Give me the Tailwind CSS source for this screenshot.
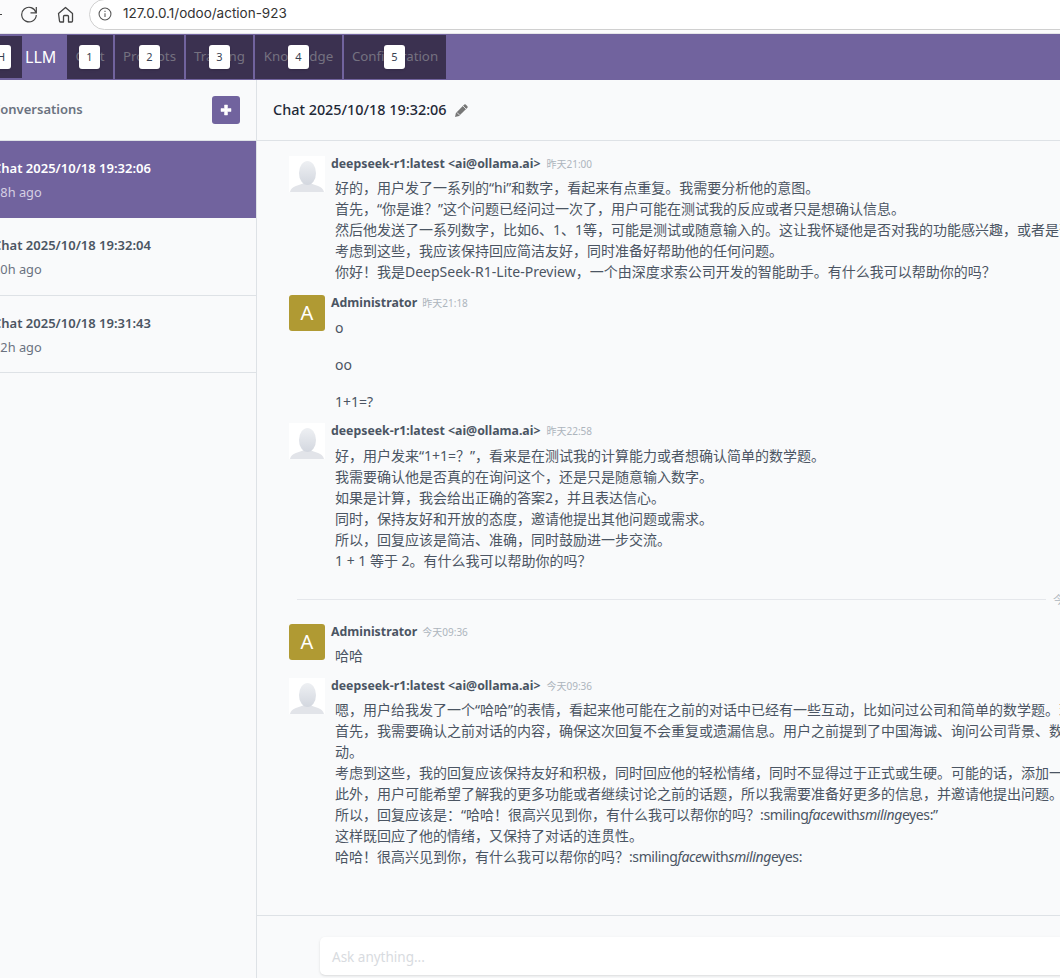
<!DOCTYPE html>
<html>
<head>
<meta charset="utf-8">
<script src="https://cdn.jsdelivr.net/npm/@tailwindcss/browser@4"></script>
</head>
<body class="w-[1060px] h-[978px] overflow-hidden bg-white font-['Noto_Sans','Noto_Sans_CJK_SC',sans-serif] text-[#374151]">
<!-- browser toolbar -->
<div class="h-[34px] bg-[#fbfbfc] border-b border-[#e5e5e8]">
  <div class="h-[28px] flex items-center">
    <div class="w-[2px] h-[1px] bg-[#444] shrink-0"></div>
    <svg class="ml-[18px] w-[18px] h-[18px] shrink-0 text-[#444]" viewBox="0 0 18 18" fill="none" stroke="currentColor" stroke-width="1.2"><path d="M16 7.500A7.300 7.300 0 1 0 16.300 10"/><path d="M16.300 2v5.800h-5.800"/></svg>
    <svg class="ml-[19px] w-[17px] h-[17px] shrink-0 text-[#444]" viewBox="0 0 17 17" fill="none" stroke="currentColor" stroke-width="1.3" stroke-linejoin="round"><path d="M1.500 7.500 8.500 1.500l7 6v7.500a1 1 0 0 1-1 1h-3V10.500a1 1 0 0 0-1-1h-3a1 1 0 0 0-1 1V16h-3a1 1 0 0 1-1-1z"/></svg>
    <div class="ml-[15px] w-[1000px] h-[31px] shrink-0 rounded-full border border-[#d0d0d0] bg-white flex items-center pl-[8px] font-['Inter','Noto_Sans',sans-serif]">
      <svg class="w-[14px] h-[14px] shrink-0 text-[#555]" viewBox="0 0 16 16" fill="none" stroke="currentColor" stroke-width="1.200"><circle cx="8" cy="8" r="6.800"/><path d="M8 7.200v4.300M8 4.200v1.500"/></svg>
      <span class="ml-[11px] text-[13.500px] leading-none text-[#333]">127.0.0.1/odoo/action-923</span>
    </div>
  </div>
</div>
<!-- odoo navbar -->
<div class="h-[46px] bg-[#71639e] flex items-stretch relative">
  <div class="w-[22px] my-[2px] bg-[#3b3150] shrink-0"></div>
  <div class="w-[45px] shrink-0 flex items-center text-[16px] text-white pl-[3px]">LLM</div>
  <div class="w-[46px] mt-[1px] mb-[1px] bg-[#3b3150] text-[#757180] text-[13.300px] flex items-center justify-center shrink-0 mr-[2px]">Chat</div>
  <div class="w-[69px] mt-[1px] mb-[1px] bg-[#3b3150] text-[#757180] text-[13.300px] flex items-center justify-center shrink-0 mr-[2px]">Prompts</div>
  <div class="w-[67px] mt-[1px] mb-[1px] bg-[#3b3150] text-[#757180] text-[13.300px] flex items-center justify-center shrink-0 mr-[2px]">Training</div>
  <div class="w-[87px] mt-[1px] mb-[1px] bg-[#3b3150] text-[#757180] text-[13.300px] flex items-center justify-center shrink-0 mr-[2px]">Knowledge</div>
  <div class="w-[102px] mt-[1px] mb-[1px] bg-[#3b3150] text-[#757180] text-[13.300px] flex items-center justify-center shrink-0">Configuration</div>
  <span class="absolute left-[-9px] top-[11px] w-[20px] h-[24px] rounded-[3px] bg-white shadow-sm text-[11px] leading-[24px] text-center text-[#374151]">H</span>
  <span class="absolute left-[79px] top-[11px] w-[21px] h-[24px] rounded-[3px] bg-white shadow-sm text-[11px] leading-[24px] text-center text-[#374151]">1</span>
  <span class="absolute left-[139px] top-[11px] w-[21px] h-[24px] rounded-[3px] bg-white shadow-sm text-[11px] leading-[24px] text-center text-[#374151]">2</span>
  <span class="absolute left-[209px] top-[11px] w-[21px] h-[24px] rounded-[3px] bg-white shadow-sm text-[11px] leading-[24px] text-center text-[#374151]">3</span>
  <span class="absolute left-[288px] top-[11px] w-[21px] h-[24px] rounded-[3px] bg-white shadow-sm text-[11px] leading-[24px] text-center text-[#374151]">4</span>
  <span class="absolute left-[384px] top-[11px] w-[21px] h-[24px] rounded-[3px] bg-white shadow-sm text-[11px] leading-[24px] text-center text-[#374151]">5</span>
</div>
<div class="flex h-[898px] bg-[#f9fafb]">
  <!-- sidebar -->
  <aside class="w-[257px] shrink-0 border-r border-[#dee2e6] flex flex-col overflow-hidden">
    <div class="h-[61px] shrink-0 flex items-center justify-between border-b border-[#dee2e6] pr-[16px]">
      <span class="-ml-[8px] text-[13px] font-semibold text-[#6b7280]">Conversations</span>
      <span class="w-[28px] h-[28px] rounded-[3px] bg-[#71639e] flex items-center justify-center">
        <svg class="w-[12px] h-[12px]" viewBox="0 0 12 12"><path d="M4.500 1h3v3.500H11v3H7.500V11h-3V7.500H1v-3h3.500z" fill="#fff" stroke="#fff" stroke-width=".5" stroke-linejoin="round"/></svg>
      </span>
    </div>
    <div class="h-[77px] shrink-0 bg-[#71639e] flex flex-col justify-center gap-[5px] -ml-[7px]">
      <div class="text-[13px] leading-[20px] font-semibold text-white whitespace-nowrap">Chat 2025/10/18 19:32:06</div>
      <div class="text-[12.800px] leading-[18px] text-[#d5cfe3] whitespace-nowrap">18h ago</div>
    </div>
    <div class="h-[78px] shrink-0 border-b border-[#dee2e6] flex flex-col justify-center gap-[5px] -ml-[7px]">
      <div class="text-[13px] leading-[20px] font-semibold text-[#4b5563] whitespace-nowrap">Chat 2025/10/18 19:32:04</div>
      <div class="text-[12.800px] leading-[18px] text-[#6b7280] whitespace-nowrap">20h ago</div>
    </div>
    <div class="h-[77px] shrink-0 border-b border-[#dee2e6] flex flex-col justify-center gap-[5px] -ml-[7px]">
      <div class="text-[13px] leading-[20px] font-semibold text-[#4b5563] whitespace-nowrap">Chat 2025/10/18 19:31:43</div>
      <div class="text-[12.800px] leading-[18px] text-[#6b7280] whitespace-nowrap">22h ago</div>
    </div>
  </aside>
  <!-- main -->
  <main class="w-[803px] shrink-0 flex flex-col overflow-hidden">
    <div class="h-[61px] shrink-0 border-b border-[#dee2e6] flex items-center pl-[16px]">
      <span class="text-[14.400px] font-medium text-[#1f2937] leading-[20px]">Chat 2025/10/18 19:32:06</span>
      <svg class="ml-[7px] w-[15px] h-[15px] shrink-0" viewBox="0 0 15 15"><path d="M1 14l.9-4L10.300 1.600a1 1 0 0 1 1.400 0l1.700 1.700a1 1 0 0 1 0 1.400L5 13.100z" fill="#777"/><path d="M9 3l3 3M3 9.500l2.500 2.500" stroke="#f9fafb" stroke-width=".8"/></svg>
    </div>
    <div class="h-[774px] shrink-0 overflow-hidden pl-[32px] pt-[15px] whitespace-nowrap text-[14px] leading-[21px] text-[#4b5563]">
      <!-- msg 1 -->
      <div class="flex gap-[6px] h-[139px]">
        <svg class="w-[36px] h-[36px] shrink-0 bg-white" viewBox="0 0 36 36"><defs><linearGradient id="g1" x1="0" y1="0" x2="0" y2="1"><stop offset="0" stop-color="#eef0f3"/><stop offset="1" stop-color="#d3d7df"/></linearGradient></defs><path d="M1 36c1-6 10-7 14-9h6c4 2 13 3 14 9z" fill="#e2e4e9"/><ellipse cx="18.500" cy="17" rx="8.500" ry="12" fill="url(#g1)"/></svg>
        <div>
          <div class="h-[14px] leading-[14px]"><b class="font-bold text-[12.300px] text-[#4b5563]">deepseek-r1:latest &lt;ai@ollama.ai&gt;</b><span class="ml-[6px] text-[10px] text-[#adb5bd]">昨天21:00</span></div>
          <div class="pl-[4px] mt-[7px]">
            <div>好的，用户发了一系列的“hi”和数字，看起来有点重复。我需要分析他的意图。</div>
            <div>首先，“你是谁？”这个问题已经问过一次了，用户可能在测试我的反应或者只是想确认信息。</div>
            <div>然后他发送了一系列数字，比如6、1、1等，可能是测试或随意输入的。这让我怀疑他是否对我的功能感兴趣，或者是否有其他意图。</div>
            <div>考虑到这些，我应该保持回应简洁友好，同时准备好帮助他的任何问题。</div>
            <div>你好！我是DeepSeek-R1-Lite-Preview，一个由深度求索公司开发的智能助手。有什么我可以帮助你的吗？</div>
          </div>
        </div>
      </div>
      <!-- msg 2 -->
      <div class="flex gap-[6px] h-[128px]">
        <div class="w-[36px] h-[36px] shrink-0 rounded-[3px] bg-[#b09a33] text-white text-[20px] leading-[36px] text-center">A</div>
        <div>
          <div class="h-[14px] leading-[14px]"><b class="font-bold text-[12.300px] text-[#4b5563]">Administrator</b><span class="ml-[5px] text-[10px] text-[#adb5bd]">昨天21:18</span></div>
          <div class="pl-[4px] mt-[8px]">
            <div class="mb-[16px]">o</div>
            <div class="mb-[16px]">oo</div>
            <div>1+1=?</div>
          </div>
        </div>
      </div>
      <!-- msg 3 -->
      <div class="flex gap-[6px] h-[176px]">
        <svg class="w-[36px] h-[36px] shrink-0 bg-white" viewBox="0 0 36 36"><path d="M1 36c1-6 10-7 14-9h6c4 2 13 3 14 9z" fill="#e2e4e9"/><ellipse cx="18.500" cy="17" rx="8.500" ry="12" fill="url(#g1)"/></svg>
        <div>
          <div class="h-[14px] leading-[14px]"><b class="font-bold text-[12.300px] text-[#4b5563]">deepseek-r1:latest &lt;ai@ollama.ai&gt;</b><span class="ml-[6px] text-[10px] text-[#adb5bd]">昨天22:58</span></div>
          <div class="pl-[4px] mt-[8px]">
            <div>好，用户发来“1+1=？”，看来是在测试我的计算能力或者想确认简单的数学题。</div>
            <div>我需要确认他是否真的在询问这个，还是只是随意输入数字。</div>
            <div>如果是计算，我会给出正确的答案2，并且表达信心。</div>
            <div>同时，保持友好和开放的态度，邀请他提出其他问题或需求。</div>
            <div>所以，回复应该是简洁、准确，同时鼓励进一步交流。</div>
            <div>1 + 1 等于 2。有什么我可以帮助你的吗？</div>
          </div>
        </div>
      </div>
      <!-- separator -->
      <div class="flex items-center h-[1px] ml-[8px] mb-[24px]">
        <div class="w-[749px] h-[1px] bg-[#e5e7eb] shrink-0"></div>
        <span class="ml-[7px] text-[11px] text-[#adb5bd]">今天</span>
      </div>
      <!-- msg 4 -->
      <div class="flex gap-[6px] h-[54px]">
        <div class="w-[36px] h-[36px] shrink-0 rounded-[3px] bg-[#b09a33] text-white text-[20px] leading-[36px] text-center">A</div>
        <div>
          <div class="h-[14px] leading-[14px]"><b class="font-bold text-[12.300px] text-[#4b5563]">Administrator</b><span class="ml-[5px] text-[10px] text-[#adb5bd]">今天09:36</span></div>
          <div class="pl-[4px] mt-[7px]"><div>哈哈</div></div>
        </div>
      </div>
      <!-- msg 5 -->
      <div class="flex gap-[6px]">
        <svg class="w-[36px] h-[36px] shrink-0 bg-white" viewBox="0 0 36 36"><path d="M1 36c1-6 10-7 14-9h6c4 2 13 3 14 9z" fill="#e2e4e9"/><ellipse cx="18.500" cy="17" rx="8.500" ry="12" fill="url(#g1)"/></svg>
        <div>
          <div class="h-[14px] leading-[14px]"><b class="font-bold text-[12.300px] text-[#4b5563]">deepseek-r1:latest &lt;ai@ollama.ai&gt;</b><span class="ml-[6px] text-[10px] text-[#adb5bd]">今天09:36</span></div>
          <div class="pl-[4px] mt-[7px]">
            <div>嗯，用户给我发了一个“哈哈”的表情，看起来他可能在之前的对话中已经有一些互动，比如问过公司和简单的数学题。现在他可能只是想轻松一下。</div>
            <div>首先，我需要确认之前对话的内容，确保这次回复不会重复或遗漏信息。用户之前提到了中国海诚、询问公司背景、数学题等，所以这次应该是轻松的互</div>
            <div>动。</div>
            <div>考虑到这些，我的回复应该保持友好和积极，同时回应他的轻松情绪，同时不显得过于正式或生硬。可能的话，添加一个表情符号。</div>
            <div>此外，用户可能希望了解我的更多功能或者继续讨论之前的话题，所以我需要准备好更多的信息，并邀请他提出问题。</div>
            <div>所以，回复应该是：“哈哈！很高兴见到你，有什么我可以帮你的吗？<span class="tracking-[-0.4px]">:smiling<i>face</i>with<i>smiling</i>eyes:</span>”</div>
            <div>这样既回应了他的情绪，又保持了对话的连贯性。</div>
            <div>哈哈！很高兴见到你，有什么我可以帮你的吗？<span class="tracking-[-0.4px]">:smiling<i>face</i>with<i>smiling</i>eyes:</span></div>
          </div>
        </div>
      </div>
    </div>
    <div class="flex-1 border-t border-[#dee2e6] pl-[63px] pt-[21px]">
      <div class="w-[900px] h-[38px] rounded-[5px] bg-white shadow-sm pl-[12px] text-[13.500px] leading-[40px] text-[#d8dbe0]">Ask anything...</div>
    </div>
  </main>
</div>
</body>
</html>
